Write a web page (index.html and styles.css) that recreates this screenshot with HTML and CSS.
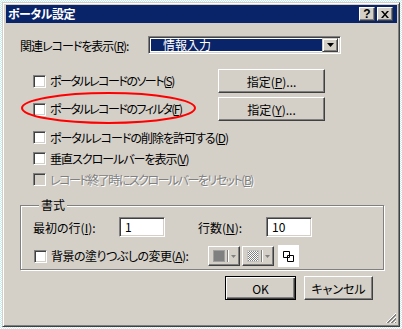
FILE: index.html
```html
<!DOCTYPE html>
<html>
    <head>
        <title>ポータル設定</title>
        <meta charset="UTF-8">
        <link rel="stylesheet" href="styles.css">
    </head>
    <body>
        <div class="window">
            <div class="titlebar">
                <span class="title">ポータル設定</span>
                <div class="caption-buttons">
                    <span class="cap-btn">?</span>
                    <span class="cap-btn">
                        <svg width="8" height="7" viewBox="0 0 8 7"><path d="M0 0h2l2 2.5L6 0h2L5 3.5 8 7H6L4 4.5 2 7H0l3-3.5z" fill="#000"/></svg>
                    </span>
                </div>
            </div>

            <div class="content">
                <div class="row-top">
                    <span class="label-show">関連レコードを表示(<u>R</u>):</span>
                    <div class="combo">
                        <span class="combo-value">情報入力</span>
                        <span class="combo-arrow">
                            <svg width="7" height="4" viewBox="0 0 7 4"><path d="M0 0h7L3.5 4z" fill="#000"/></svg>
                        </span>
                    </div>
                </div>

                <div class="check-row btn-row">
                    <span class="check tight"><span class="box"></span>ポータルレコードのソート(<u>S</u>)</span>
                    <span class="btn btn-spec">指定(<u>P</u>)...</span>
                </div>
                <div class="check-row btn-row second">
                    <span class="check tight"><span class="box"></span>ポータルレコードのフィルタ(<u>F</u>)</span>
                    <span class="btn btn-spec">指定(<u>Y</u>)...</span>
                </div>
                <div class="check-row plain first-plain">
                    <span class="check"><span class="box"></span>ポータルレコードの削除を許可する(<u>D</u>)</span>
                </div>
                <div class="check-row plain">
                    <span class="check"><span class="box"></span>垂直スクロールバーを表示(<u>V</u>)</span>
                </div>
                <div class="check-row plain">
                    <span class="check tight disabled"><span class="box"></span>レコード終了時にスクロールバーをリセット(<u>B</u>)</span>
                </div>

                <fieldset class="group">
                    <legend>書式</legend>
                    <div class="field-row">
                        <span class="lbl-first">最初の行(<u>I</u>):</span>
                        <span class="textbox">1</span>
                        <span class="lbl-count">行数(<u>N</u>):</span>
                        <span class="textbox">10</span>
                    </div>
                    <div class="field-row fill-row">
                        <span class="check fill-check"><span class="box"></span>背景の塗りつぶしの変更(<u>A</u>):</span>
                        <span class="pick">
                            <span class="swatch"></span>
                            <span class="pick-sep"></span>
                            <svg width="5" height="3" viewBox="0 0 5 3"><path d="M0 0h5L2.5 3z" fill="#808080"/></svg>
                        </span>
                        <span class="pick">
                            <span class="swatch dither"></span>
                            <span class="pick-sep"></span>
                            <svg width="5" height="3" viewBox="0 0 5 3"><path d="M0 0h5L2.5 3z" fill="#808080"/></svg>
                        </span>
                        <span class="toggle">
                            <svg width="11" height="11" viewBox="0 0 11 11"><path d="M0.5 0.5h6v6h-6z M4.5 4.5h6v6h-6z" fill="none" stroke="#000"/></svg>
                        </span>
                    </div>
                </fieldset>

                <div class="actions">
                    <span class="btn btn-ok">OK</span>
                    <span class="btn btn-cancel">キャンセル</span>
                </div>
            </div>

            <svg class="grip" width="12" height="12" viewBox="0 0 12 12">
                <path d="M11 1L1 11M11 5L5 11M11 9L9 11" stroke="#fff" stroke-width="1"/>
                <path d="M11 2L2 11M11 3L3 11M11 6L6 11M11 7L7 11M11 10L10 11" stroke="#808080" stroke-width="1"/>
            </svg>

            <svg class="mark" width="398" height="325" viewBox="0 0 398 325">
                <ellipse cx="105.5" cy="105" rx="86.5" ry="15" fill="none" stroke="#ff0000" stroke-width="2"/>
            </svg>
        </div>
    </body>
</html>
```

FILE: styles.css
```css
* {
    margin: 0;
    padding: 0;
    box-sizing: border-box;
}
body {
    background: repeating-conic-gradient(#c4efef 0 25%, #ffffff 0 50%) 0 0 / 2px 2px;
    font-family: "Noto Sans CJK JP", "Liberation Sans", sans-serif;
    font-size: 12px;
    color: #000;
    font-feature-settings: "palt";
}
u {
    text-decoration: underline;
    text-underline-offset: 1px;
}
.window {
    position: relative;
    margin: 2px;
    width: 398px;
    height: 325px;
    background: #d4d0c8;
    border: 1px solid;
    border-color: #d4d0c8 #404040 #404040 #d4d0c8;
    box-shadow: inset 1px 1px #fff, inset -1px -1px #808080;
    padding: 2px 2px 2px 3px;
}
.titlebar {
    display: flex;
    justify-content: space-between;
    align-items: center;
    height: 18px;
    background: #0a246a;
    padding: 0 4px 0 2px;
}
.title {
    color: #fff;
    font-weight: bold;
    line-height: 18px;
    letter-spacing: -0.5px;
}
.caption-buttons {
    display: flex;
    gap: 2px;
}
.cap-btn {
    display: flex;
    justify-content: center;
    align-items: center;
    width: 16px;
    height: 14px;
    background: #d4d0c8;
    border: 1px solid;
    border-color: #fff #404040 #404040 #fff;
    box-shadow: inset -1px -1px #808080;
    font: bold 12px "Liberation Sans", sans-serif;
    line-height: 12px;
}

.content {
    display: flex;
    flex-direction: column;
}
.row-top {
    display: flex;
    align-items: center;
    margin-top: 13px;
    padding-left: 14px;
    height: 18px;
}
.label-show {
    width: 128px;
    letter-spacing: -1px;
}
.combo {
    display: flex;
    width: 193px;
    height: 18px;
    background: #fff;
    border: 1px solid;
    border-color: #808080 #fff #fff #808080;
    box-shadow: inset 1px 1px #404040, inset -1px -1px #d4d0c8;
    padding: 2px;
}
.combo-value {
    flex: 1;
    background: #0a246a;
    color: #fff;
    line-height: 12px;
    padding-left: 12px;
}
.combo-arrow {
    display: flex;
    justify-content: center;
    align-items: center;
    width: 16px;
    height: 14px;
    margin-top: -1px;
    background: #d4d0c8;
    border: 1px solid;
    border-color: #d4d0c8 #404040 #404040 #d4d0c8;
    box-shadow: inset 1px 1px #fff, inset -1px -1px #808080;
}

.check-row {
    display: flex;
    align-items: center;
    padding-left: 27px;
}
.btn-row {
    height: 24px;
    margin-top: 15px;
}
.btn-row.second {
    margin-top: 4px;
}
.plain {
    height: 21px;
}
.first-plain {
    margin-top: 6px;
}
.check {
    display: flex;
    align-items: center;
    line-height: 14px;
    letter-spacing: -1px;
}
.check.tight {
    letter-spacing: -1.5px;
}
.btn-row .check {
    width: 185px;
}
.box {
    width: 13px;
    height: 13px;
    margin-right: 4px;
    background: #fff;
    border: 1px solid;
    border-color: #808080 #fff #fff #808080;
    box-shadow: inset 1px 1px #404040, inset -1px -1px #d4d0c8;
}
.disabled {
    color: #808080;
    text-shadow: 1px 1px #fff;
}
.disabled .box {
    background: #d4d0c8;
}

.btn {
    display: flex;
    justify-content: center;
    align-items: center;
    height: 24px;
    background: #d4d0c8;
    border: 1px solid;
    border-color: #fff #404040 #404040 #fff;
    box-shadow: inset -1px -1px #808080;
}
.btn-spec {
    width: 107px;
}

.group {
    margin: 8px 0 0 14px;
    width: 364px;
    border: 1px solid #808080;
    box-shadow: inset 1px 1px #fff, 1px 1px #fff;
    padding: 5px 0 3px 12px;
}
.group legend {
    margin-left: 6px;
    padding: 0 2px;
    line-height: 14px;
    background: #d4d0c8;
}
.field-row {
    display: flex;
    align-items: center;
    height: 20px;
}
.lbl-first {
    width: 86px;
}
.lbl-count {
    width: 68px;
    margin-left: 33px;
}
.textbox {
    width: 46px;
    height: 20px;
    padding: 2px 0 0 5px;
    line-height: 14px;
    background: #fff;
    border: 1px solid;
    border-color: #808080 #fff #fff #808080;
    box-shadow: inset 1px 1px #404040, inset -1px -1px #d4d0c8;
}
.fill-row {
    margin-top: 9px;
}
.fill-check {
    width: 174px;
    margin-left: 1px;
    letter-spacing: -0.5px;
}
.pick {
    display: flex;
    align-items: center;
    gap: 2px;
    width: 32px;
    height: 20px;
    margin-right: 2px;
    padding-left: 4px;
    background: #d4d0c8;
    border: 1px solid;
    border-color: #fff #404040 #404040 #fff;
    box-shadow: inset -1px -1px #808080;
}
.swatch {
    width: 12px;
    height: 12px;
    background: #808080;
    border: 1px solid #a0a0a0;
}
.dither {
    background: repeating-conic-gradient(#808080 0 25%, #ffffff 0 50%) 0 0 / 2px 2px;
    border-color: #c0c0c0;
}
.pick-sep {
    width: 2px;
    height: 12px;
    border-left: 1px solid #808080;
    border-right: 1px solid #fff;
}
.toggle {
    display: flex;
    justify-content: center;
    align-items: center;
    width: 21px;
    height: 22px;
    margin-left: 2px;
    background: #fff;
}

.actions {
    display: flex;
    justify-content: flex-end;
    gap: 8px;
    margin-top: 6px;
    padding-right: 24px;
}
.btn-ok {
    width: 71px;
    border: 1px solid #000;
    box-shadow: inset 1px 1px #fff, inset -1px -1px #404040, inset -2px -2px #808080;
}
.btn-cancel {
    width: 69px;
}

.grip {
    position: absolute;
    right: 2px;
    bottom: 2px;
}
.mark {
    position: absolute;
    left: 0;
    top: 0;
    pointer-events: none;
}
```
